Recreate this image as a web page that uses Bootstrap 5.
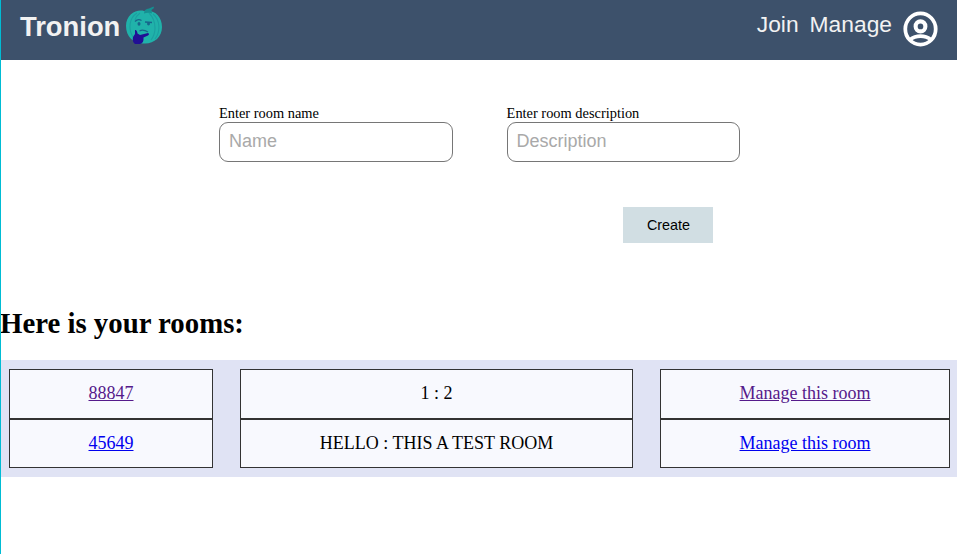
<!DOCTYPE html>
<html lang="en">
<head>
<meta charset="utf-8">
<meta name="viewport" content="width=device-width, initial-scale=1">
<title>Tronion</title>
<link href="https://cdn.jsdelivr.net/npm/bootstrap@5.3.0/dist/css/bootstrap.min.css" rel="stylesheet">
<style>
body{font-family:"Liberation Serif",serif;font-size:14.4px;line-height:17px;color:#000;background:#fff;border-left:1px solid #00bcd4;min-height:100vh}
.topbar{height:60px;background:#3d516b;padding:0 16px 0 19px;font-family:"Liberation Sans",sans-serif}
.topbar a{color:#f2f2f2;text-decoration:none}
.brand{font-size:27.36px;font-weight:700;line-height:30px;margin-top:12px}
.logo{width:40px;height:44px;margin:4px 0 0 4px}
.menu{font-size:22.8px;line-height:26px;margin-top:11px;gap:11px}
.avatar{width:41px;height:42px;margin:8px 0 0 8px}
.room-form{padding:45px 217px 0 218px}
.fields{display:grid;grid-template-columns:234px 233.4px;column-gap:53.6px}
.room-form label{margin:0;display:block}
.room-form .form-control{height:40px;border:1px solid #767676;border-radius:9px;padding:0 9px 2px;font:18px "Liberation Sans",sans-serif}
.room-form .form-control::placeholder{color:#a9a9a9;opacity:1}
.room-form .btn{width:90px;height:36px;margin:45px 27px 0 0;padding:0 0 0 1px;border:0;border-radius:0;background:#d1dee3;color:#000;font:14.4px "Liberation Sans",sans-serif}
.rooms-title{font-size:28.8px;font-weight:700;line-height:33px;margin:64px 0 20px -1px}
.rooms{background:#e0e3f4;padding:9px 7px 9px 8px}
.room-row{display:grid;grid-template-columns:204px 393px 290px;column-gap:27px;height:50px;font-size:18px;line-height:20px}
.room-row:last-child{height:49px}
.room-row>div{border:1px solid #333;background:#f8f9fe;text-align:center;padding-top:13px}
.rooms a{color:#00e;text-decoration:underline}
.rooms a.seen{color:#551a8b}
</style>
<script src="https://cdn.jsdelivr.net/npm/bootstrap@5.3.0/dist/js/bootstrap.bundle.min.js"></script>
</head>
<body>
<header class="topbar d-flex align-items-start">
  <a class="brand" href="#">Tronion</a>
  <svg class="logo" viewBox="0 0 40 44" aria-hidden="true">
    <path d="M20 7C12 5 2 11 2 22C2 33 10 40 20 39.500C30 40 38 33 38 23C38 12 30 5 20 7Z" fill="#20b2aa"/>
    <path d="M20 9.500Q20 5 25 4.500L29.500 2.500 30 4 27.500 6 28 9.500Q24 8 20 9.500Z" fill="#168f91"/>
    <path d="M13 9C5 14 4 25 9 33M16 9Q12 12 11 16M29 10C36 16 37 27 31 35M25 9Q31 15 31 24Q31 31 27 36" fill="none" stroke="#1b9fa0" stroke-width="1.100"/>
    <path d="M11 17.500Q14 14.500 17.500 16.500M21 18L28 18.500" fill="none" stroke="#17668b" stroke-width="1.300"/>
    <ellipse cx="15" cy="19.800" rx="1.500" ry="1.900" fill="#17668b"/><ellipse cx="24.500" cy="19.800" rx="1.500" ry="1.600" fill="#17668b"/>
    <path d="M15.500 27Q19 25 24 28" fill="none" stroke="#17668b" stroke-width="1.200"/>
    <path d="M11 26Q13 25.500 13.500 29.500L16 31 24 29Q26 30 24 31.500L19.500 33.500Q20 39 16 40H11Q8 38 9 33L11 30Z" fill="#210f95"/>
  </svg>
  <nav class="menu d-flex ms-auto"><a href="#">Join</a><a href="#">Manage</a></nav>
  <svg class="avatar" viewBox="0 0 24 24" preserveAspectRatio="none" fill="none" stroke="#fff" stroke-width="2.200" aria-label="Profile">
    <circle cx="12" cy="12" r="8.900"/><circle cx="12" cy="10.500" r="2.850" stroke-width="2.400"/>
    <path d="M5.800 18.200Q8.500 16.100 12 16.100T18.200 18.200"/>
  </svg>
</header>
<main>
  <form class="room-form">
    <div class="fields">
      <div><label for="name">Enter room name</label><input id="name" class="form-control" placeholder="Name"></div>
      <div><label for="desc">Enter room description</label><input id="desc" class="form-control" placeholder="Description"></div>
    </div>
    <div class="d-flex justify-content-end"><button type="button" class="btn">Create</button></div>
  </form>
  <h1 class="rooms-title">Here is your rooms:</h1>
  <section class="rooms">
    <div class="room-row"><div><a class="seen" href="#">88847</a></div><div>1 : 2</div><div><a class="seen" href="#">Manage this room</a></div></div>
    <div class="room-row"><div><a href="#">45649</a></div><div>HELLO : THIS A TEST ROOM</div><div><a href="#">Manage this room</a></div></div>
  </section>
</main>
</body>
</html>
